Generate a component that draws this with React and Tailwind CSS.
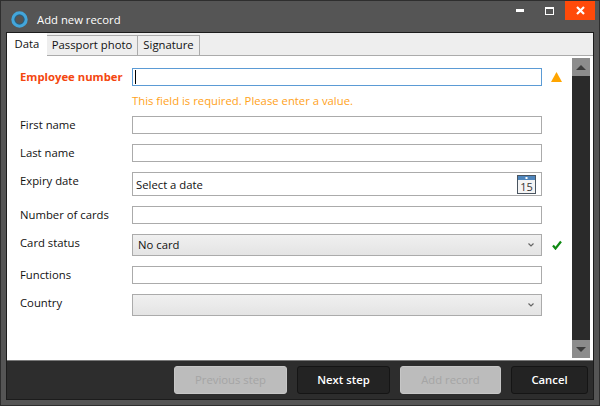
import React from 'react';

const FONT = "font-['Open_Sans','Noto_Sans',sans-serif]";

const Field = ({ label, top = 'mt-[10px]', height = 'h-[18px]', children }) => (
  <div className={`flex ${top}`}>
    <div className="w-[112px] shrink-0 text-[11.3px] leading-[16px] pt-px text-[#111111]">{label}</div>
    <div className={`w-[410px] shrink-0 ${height} border border-[#ababab] bg-white flex items-center`}>{children}</div>
  </div>
);

const Combo = ({ label, value, top }) => (
  <div className={`flex ${top}`}>
    <div className="w-[112px] shrink-0 text-[11.3px] leading-[16px] pt-px text-[#111111]">{label}</div>
    <div className="w-[410px] shrink-0 h-[22px] border border-[#ababab] bg-gradient-to-b from-[#f0f0f0] to-[#e4e4e4] flex items-center justify-between pl-[5px] pr-[7px]">
      <span className="text-[11.3px] pt-px text-[#111111]">{value}</span>
      <svg width="6" height="4" viewBox="0 0 6 4" fill="none" stroke="#666" strokeWidth="1.2">
        <path d="M0.5 0.5 L3 3 L5.5 0.5" />
      </svg>
    </div>
  </div>
);

const FootButton = ({ width, disabled, children }) => (
  <div
    className={`${width} h-[28px] rounded-[3px] flex items-center justify-center text-[11.3px] ${
      disabled
        ? 'bg-[#bcbcbc] border border-[#c6c6c6] text-[#a5a5a5]'
        : 'bg-[#232323] border border-[#151515] text-white font-semibold'
    }`}
  >
    {children}
  </div>
);

const App = () => {
  return (
    <div className={`w-[600px] h-[406px] bg-[#555555] border border-[#2e2e2e] flex flex-col overflow-hidden ${FONT}`}>
      {/* Title bar */}
      <div className="h-[31px] shrink-0 flex items-start pl-[10px] pr-[4px]">
        <svg width="17" height="17" viewBox="0 0 17 17" className="mt-[10px]">
          <circle cx="8.5" cy="8.5" r="6.5" fill="none" stroke="#43a6db" strokeWidth="3.4" />
          <circle cx="8.5" cy="8.5" r="4.6" fill="none" stroke="#1d5f86" strokeWidth="1" />
        </svg>
        <span className="ml-[9px] mt-[11px] text-[11.3px] leading-[16px] text-white">Add new record</span>
        <div className="ml-auto flex items-start">
          <div className="w-[8px] h-[3px] bg-white mt-[8px]" />
          <div className="w-[9px] h-[8px] border border-white border-t-2 mt-[6px] ml-[21px]" />
          <div className="w-[30px] h-[19px] bg-[#ff4a0a] ml-[11px] flex items-center justify-center">
            <svg width="9" height="9" viewBox="0 0 9 9" stroke="#fff" strokeWidth="2.2">
              <path d="M1 1 L8 8 M8 1 L1 8" />
            </svg>
          </div>
        </div>
      </div>

      {/* Dialog frame */}
      <div className="mx-[5px] h-[368px] border border-[#1c1c1c] flex flex-col">
        <div className="h-[327px] bg-white flex flex-col">
          {/* Tabs */}
          <div className="h-[23px] shrink-0 bg-[#eeeeee] border-b border-[#ababab] flex items-end text-[11.3px] text-[#111111]">
            <div className="w-[40px] h-[23px] -mb-px bg-white flex items-center justify-center">Data</div>
            <div className="w-[91px] h-[21px] -mb-px border border-[#ababab] border-l-0 flex items-center justify-center">Passport photo</div>
            <div className="w-[62px] h-[21px] -mb-px border border-[#ababab] border-l-0 flex items-center justify-center">Signature</div>
          </div>

          <div className="flex-1 flex">
            {/* Form */}
            <div className="w-[565px] shrink-0 pl-[13px] pt-[12px]">
              <div className="flex">
                <div className="w-[112px] shrink-0 text-[11.3px] leading-[18px] font-bold text-[#f4460f]">Employee number</div>
                <div className="w-[410px] shrink-0 h-[18px] border border-[#5b9bd5] flex items-center pl-[2px]">
                  <div className="w-px h-[14px] bg-black" />
                </div>
                <svg width="11" height="10" viewBox="0 0 11 10" className="ml-[9px] mt-[4px]">
                  <path d="M5.5 0 L11 10 L0 10 Z" fill="#ffa500" />
                </svg>
              </div>
              <div className="pl-[112px] mt-[7px] h-[16px] text-[11.3px] leading-[16px] text-[#ffa21a]">
                This field is required. Please enter a value.
              </div>
              <Field label="First name" top="mt-[7px]" />
              <Field label="Last name" />
              <Field label="Expiry date" height="h-[24px]">
                <span className="pl-[3px] pt-[2px] text-[11.3px] text-[#111111]">Select a date</span>
                <svg width="19" height="19" viewBox="0 0 19 19" className="ml-auto mr-[5px]">
                  <rect x="0.5" y="0.5" width="18" height="18" fill="#f4f4f4" stroke="#4a5560" />
                  <rect x="1" y="1" width="17" height="4" fill="#4f86bd" />
                  <rect x="8.5" y="2" width="2" height="2" fill="#fff" />
                  <text x="9.5" y="16" textAnchor="middle" fontSize="11" fill="#333">15</text>
                </svg>
              </Field>
              <Field label="Number of cards" />
              <div className="relative">
                <Combo label="Card status" value="No card" top="mt-[10px]" />
                <svg width="10" height="10" viewBox="0 0 10 10" className="absolute left-[532px] top-[6px]">
                  <path d="M1 5.5 L3.5 8.5 L9 1.5" fill="none" stroke="#0f8a14" strokeWidth="2.2" />
                </svg>
              </div>
              <Field label="Functions" />
              <Combo label="Country" value="" top="mt-[10px]" />
            </div>

            {/* Scrollbar */}
            <div className="w-[18px] shrink-0 mt-[2px] h-[300px] bg-[#2a2a2a] flex flex-col justify-between">
              <div className="h-[18px] bg-[#8c8c8c] flex items-center justify-center">
                <div className="w-0 h-0 border-x-[5px] border-x-transparent border-b-[5px] border-b-[#3c3c3c]" />
              </div>
              <div className="h-[18px] bg-[#8c8c8c] flex items-center justify-center">
                <div className="w-0 h-0 border-x-[5px] border-x-transparent border-t-[5px] border-t-[#3c3c3c]" />
              </div>
            </div>
          </div>
        </div>

        {/* Footer */}
        <div className="flex-1 border-t border-[#7a7a7a] bg-[#2d2d2d] flex items-center justify-end gap-[10px] pr-[5px]">
          <FootButton width="w-[113px]" disabled>Previous step</FootButton>
          <FootButton width="w-[93px]">Next step</FootButton>
          <FootButton width="w-[101px]" disabled>Add record</FootButton>
          <FootButton width="w-[77px]">Cancel</FootButton>
        </div>
      </div>
    </div>
  );
};

export default App;
